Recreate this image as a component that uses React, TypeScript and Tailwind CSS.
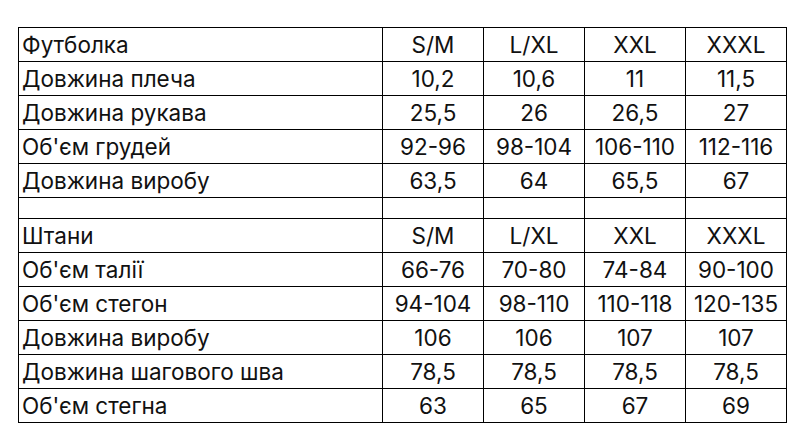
import React from "react";

const rows: (string[] | null)[] = [
  ["Футболка", "S/M", "L/XL", "XXL", "XXXL"],
  ["Довжина плеча", "10,2", "10,6", "11", "11,5"],
  ["Довжина рукава", "25,5", "26", "26,5", "27"],
  ["Об'єм грудей", "92-96", "98-104", "106-110", "112-116"],
  ["Довжина виробу", "63,5", "64", "65,5", "67"],
  null,
  ["Штани", "S/M", "L/XL", "XXL", "XXXL"],
  ["Об'єм талії", "66-76", "70-80", "74-84", "90-100"],
  ["Об'єм стегон", "94-104", "98-110", "110-118", "120-135"],
  ["Довжина виробу", "106", "106", "107", "107"],
  ["Довжина шагового шва", "78,5", "78,5", "78,5", "78,5"],
  ["Об'єм стегна", "63", "65", "67", "69"],
];

export default function App() {
  return (
    <div className="w-[810px] h-[444px] bg-white pt-[27px] pl-[18px]" style={{ fontFamily: "Inter, 'Noto Sans', sans-serif" }}>
      <div className="grid w-[769px] grid-cols-[363px_100px_100px_100px_100px] gap-px bg-black p-px text-[22.5px] text-[#111]">
        {rows.map((r, i) =>
          r === null ? (
            <React.Fragment key={i}>
              {[0, 1, 2, 3, 4].map((j) => (
                <div key={j} className="h-[20px] bg-white" />
              ))}
            </React.Fragment>
          ) : (
            <React.Fragment key={i}>
              {r.map((c, j) => (
                <div
                  key={j}
                  className={
                    j === 0
                      ? "flex h-[33px] items-center bg-white pl-[3px] whitespace-nowrap"
                      : "flex h-[33px] items-center justify-center bg-white whitespace-nowrap"
                  }
                >
                  {c}
                </div>
              ))}
            </React.Fragment>
          )
        )}
      </div>
    </div>
  );
}
